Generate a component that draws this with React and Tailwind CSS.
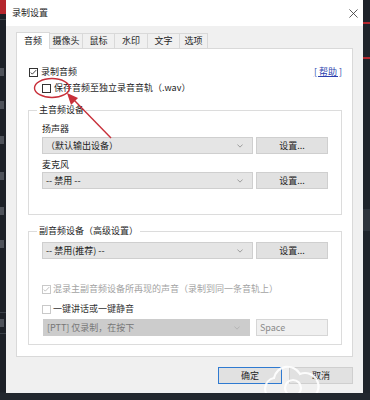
import React from 'react';

const FONT = { fontFamily: '"Microsoft YaHei", "Noto Sans CJK SC", "Noto Sans", sans-serif' };

const Box = ({ checked, disabled }) => (
  <span className={`w-[9px] h-[9px] border bg-white flex items-center justify-center shrink-0 ${disabled ? 'border-[#c9c9c9]' : 'border-[#333]'}`}>
    {checked && (
      <svg viewBox="0 0 9 9" className="w-[7px] h-[7px]">
        <path d="M1 4.6l2 2L8 1.4" fill="none" stroke={disabled ? '#b5b5b5' : '#222'} strokeWidth="1.1" />
      </svg>
    )}
  </span>
);

const Chevron = ({ color = '#777' }) => (
  <svg viewBox="0 0 8 5" className="w-[6px] h-[4px]">
    <path d="M0.5 0.5L4 4l3.5-3.5" fill="none" stroke={color} strokeWidth="0.9" />
  </svg>
);

const Select = ({ children, disabled }) => (
  <div className={`h-[17px] flex items-center justify-between pl-[3px] pr-[9px] border ${disabled ? 'w-[207px] bg-[#cccccc] border-[#cccccc] text-[#777]' : 'w-[211px] bg-[#e5e5e5] border-[#cfcfcf] text-[#222]'}`}>
    <span>{children}</span>
    <Chevron color={disabled ? '#a8a8a8' : '#7b7b7b'} />
  </div>
);

const Btn = ({ children }) => (
  <div className="w-[72px] h-[17px] bg-[#e1e1e1] border border-[#cfcfcf] flex items-center justify-center text-[#222]">
    {children}
  </div>
);

const Tab = ({ label, active, w }) =>
  active ? (
    <div className={`${w} h-[17px] bg-white border border-b-0 border-[#d9d9d9] flex items-center justify-center relative z-10 mb-[-1px]`}>
      {label}
    </div>
  ) : (
    <div className={`${w} h-[15px] border border-l-0 border-b-0 border-[#d9d9d9] flex items-center justify-center`}>
      {label}
    </div>
  );

// bits of the app's sidebar that peek out to the left of the dialog
const Peek = ({ mt }) => <div className={`${mt} w-[4px] h-[8px] bg-[#6f757d] opacity-60`}></div>;

export default function App() {
  return (
    <div style={FONT} className="w-[370px] h-[400px] bg-[#1f242b] relative overflow-hidden text-[9px] leading-[12px] text-[#1e1e1e] flex">
      <div className="w-[6px] h-[392px] bg-[#1c2027] overflow-hidden flex flex-col">
        <div className="h-[14px] bg-[#b5272e] shrink-0"></div>
        <div className="h-[6px] border-b border-[#3a4048] shrink-0"></div>
        <Peek mt="mt-[48px]" />
        <Peek mt="mt-[25px]" />
        <Peek mt="mt-[27px]" />
        <Peek mt="mt-[28px]" />
        <Peek mt="mt-[27px]" />
        <Peek mt="mt-[25px]" />
        <div className="mt-[64px] border-t border-[#3a4048]"></div>
        <Peek mt="mt-[6px]" />
        <div className="mt-[6px] border-t border-[#3a4048]"></div>
      </div>

      {/* dialog */}
      <div className="w-[357px] h-[393px] bg-[#f0f0f0] flex flex-col">
        <div className="h-[26px] bg-white flex items-center justify-between pl-[6px] pr-[5px] shrink-0">
          <span className="text-[9px]">录制设置</span>
          <svg viewBox="0 0 10 10" className="w-[9px] h-[9px]">
            <path d="M0.5 0.5l9 9M9.5 0.5l-9 9" stroke="#333" strokeWidth="0.9" />
          </svg>
        </div>

        <div className="flex items-end ml-[10px] mt-[6px]">
          <Tab label="音频" active w="w-[34px]" />
          <Tab label="摄像头" w="w-[33px]" />
          <Tab label="鼠标" w="w-[32px]" />
          <Tab label="水印" w="w-[33px]" />
          <Tab label="文字" w="w-[32px]" />
          <Tab label="选项" w="w-[28px]" />
        </div>

        <div className="mx-[10px] h-[309px] bg-white border border-[#d9d9d9] flex flex-col">
          <div className="flex justify-between pt-[15px] pl-[12px] pr-[10px]">
            <div className="flex flex-col">
              <div className="h-[16px] flex items-center gap-[3px]">
                <Box checked />
                <span>录制音频</span>
              </div>
              <div className="h-[16px] flex items-center gap-[3px] ml-[13px]">
                <Box />
                <span>保存音频至独立录音音轨（.wav）</span>
              </div>
            </div>
            <span className="h-[16px] flex items-center text-[#2b3fae] underline">[ 帮助 ]</span>
          </div>

          <fieldset className="mt-[6px] mx-[11px] border border-[#dcdcdc] px-[13px] pb-[25px]">
            <legend className="ml-[-5px] px-[2px] leading-[16px]">主音频设备</legend>
            <div className="pt-[4px] h-[18px] leading-[14px]">扬声器</div>
            <div className="flex gap-[3px] mt-[1px]">
              <Select>（默认输出设备）</Select>
              <Btn>设置...</Btn>
            </div>
            <div className="mt-[4px] h-[14px] leading-[14px]">麦克风</div>
            <div className="flex gap-[3px]">
              <Select>-- 禁用 --</Select>
              <Btn>设置...</Btn>
            </div>
          </fieldset>

          <fieldset className="mt-[8px] mx-[11px] border border-[#dcdcdc] px-[13px] pb-[8px]">
            <legend className="ml-[-5px] px-[2px] leading-[16px]">副音频设备（高级设置）</legend>
            <div className="flex gap-[3px] mt-[3px]">
              <Select>-- 禁用(推荐) --</Select>
              <Btn>设置...</Btn>
            </div>
            <div className="h-[16px] mt-[22px] flex items-center gap-[2px] text-[#a3a3a3]">
              <Box checked disabled />
              <span>混录主副音频设备所再现的声音（录制到同一条音轨上）</span>
            </div>
            <div className="h-[16px] mt-[4px] flex items-center gap-[2px] text-[#333]">
              <Box disabled />
              <span>一键讲话或一键静音</span>
            </div>
            <div className="flex gap-[6px] mt-[2px] ml-[1px]">
              <Select disabled>[PTT] 仅录制，在按下</Select>
              <div className="w-[72px] h-[17px] bg-[#f0f0f0] border border-[#d6d6d6] flex items-center pl-[3px] text-[#8a8a8a]">
                Space
              </div>
            </div>
          </fieldset>
        </div>

        <div className="flex justify-end gap-[7px] mt-[10px] mr-[10px]">
          <div className="w-[64px] h-[17px] bg-[#e1e1e1] border border-[#2f7ad1] flex items-center justify-center">确定</div>
          <div className="w-[64px] h-[17px] bg-[#e1e1e1] border border-[#cfcfcf] flex items-center justify-center">取消</div>
        </div>
      </div>

      <div className="flex-1 h-[392px] bg-[#1f242b] flex flex-col">
        <div className="mt-[22px] h-[2px] bg-[#b5272e]"></div>
        <div className="mt-[33px] h-[2px] bg-[#b5272e]"></div>
        <div className="mt-[150px] h-[22px] bg-[#2e343c]"></div>
      </div>

      {/* red annotation and watermark cloud */}
      <svg className="absolute left-0 top-0 w-[370px] h-[400px] pointer-events-none" viewBox="0 0 370 400">
        <ellipse cx="52" cy="88" rx="17.5" ry="9.5" fill="none" stroke="#c8303a" strokeWidth="1.4" />
        <line x1="111" y1="138" x2="73" y2="99" stroke="#c8303a" strokeWidth="1.4" />
        <polygon points="67,93 78,98 71,105" fill="#c8303a" />
        <g fill="none" stroke="#ffffff" strokeWidth="2.2" opacity="0.9">
          <path d="M272 399a11 11 0 0 1 2-21a14 14 0 0 1 26-4a11 11 0 0 1 10 25" />
          <circle cx="293" cy="388" r="8" />
        </g>
      </svg>
      <div className="absolute left-0 right-0 bottom-0 h-[7px] bg-[#22272e]"></div>
    </div>
  );
}
